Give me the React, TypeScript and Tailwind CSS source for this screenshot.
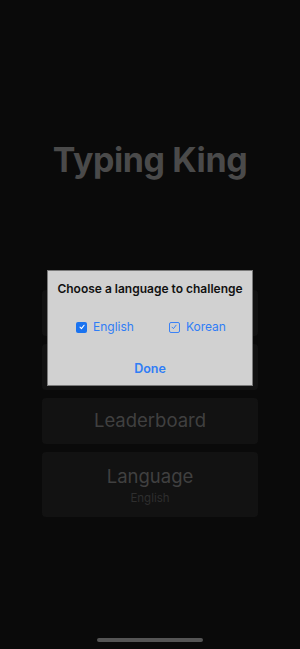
export default function App() {
  return (
    <div
      className="relative h-[649px] w-[300px] overflow-hidden bg-[#0a0a0a]"
      style={{ fontFamily: 'Inter, "Noto Sans", sans-serif' }}
    >
      <div className="flex flex-col items-center">
        <h1 className="mt-[140px] text-[34px] font-bold leading-[40px] tracking-[-0.4px] text-[#4a4a4a]">
          Typing King
        </h1>

        <div className="mt-[110px] flex w-[216px] flex-col gap-2">
          {/* these two sit under the dialog */}
          <div className="h-[46px] rounded-sm bg-[#121212]" />
          <div className="h-[46px] rounded-sm bg-[#121212]" />
          <div className="flex h-[46px] items-center justify-center rounded-sm bg-[#121212] text-[18.5px] text-[#404040]">
            Leaderboard
          </div>
          <div className="flex h-[65px] flex-col items-center justify-center rounded-sm bg-[#121212]">
            <span className="text-[18.5px] leading-[26px] text-[#404040]">Language</span>
            <span className="mt-[1px] text-[11.5px] leading-[16px] text-[#2e2e2e]">English</span>
          </div>
        </div>
      </div>

      {/* language picker */}
      <div className="absolute left-[47px] top-[270px] flex h-[116px] w-[206px] flex-col items-center border border-[#7a7a7a] bg-[#d1d1d1]">
        <p className="mt-[9px] text-[12px] font-semibold leading-[18px] text-[#111]">
          Choose a language to challenge
        </p>
        <div className="mt-[20px] flex w-full items-center pl-[28px]">
          <label className="flex items-center gap-[6px] text-[12px] text-[#2f7df6]">
            <span className="flex h-[11px] w-[11px] items-center justify-center rounded-[2px] bg-[#1a73f0]">
              <svg viewBox="0 0 10 10" className="h-[8px] w-[8px]" fill="none" stroke="white" strokeWidth="1.4" strokeLinecap="round" strokeLinejoin="round">
                <path d="M2.5 5.2 4.3 7 7.6 2.8" />
              </svg>
            </span>
            English
          </label>
          <label className="ml-[35px] flex items-center gap-[6px] text-[12px] text-[#2f7df6]">
            <span className="flex h-[11px] w-[11px] items-center justify-center rounded-[2px] border border-[#3b82f6]">
              <svg viewBox="0 0 10 10" className="h-[8px] w-[8px]" fill="none" stroke="#2f7df6" strokeWidth="1.2" strokeLinecap="round" strokeLinejoin="round">
                <path d="M2.5 5.2 4.3 7 7.6 2.8" />
              </svg>
            </span>
            Korean
          </label>
        </div>
        <button className="mt-[24px] text-[12.5px] font-semibold text-[#2f7df6]">Done</button>
      </div>

      <div className="absolute bottom-[7px] left-[97px] h-[4px] w-[106px] rounded-full bg-[#555]" />
    </div>
  );
}
